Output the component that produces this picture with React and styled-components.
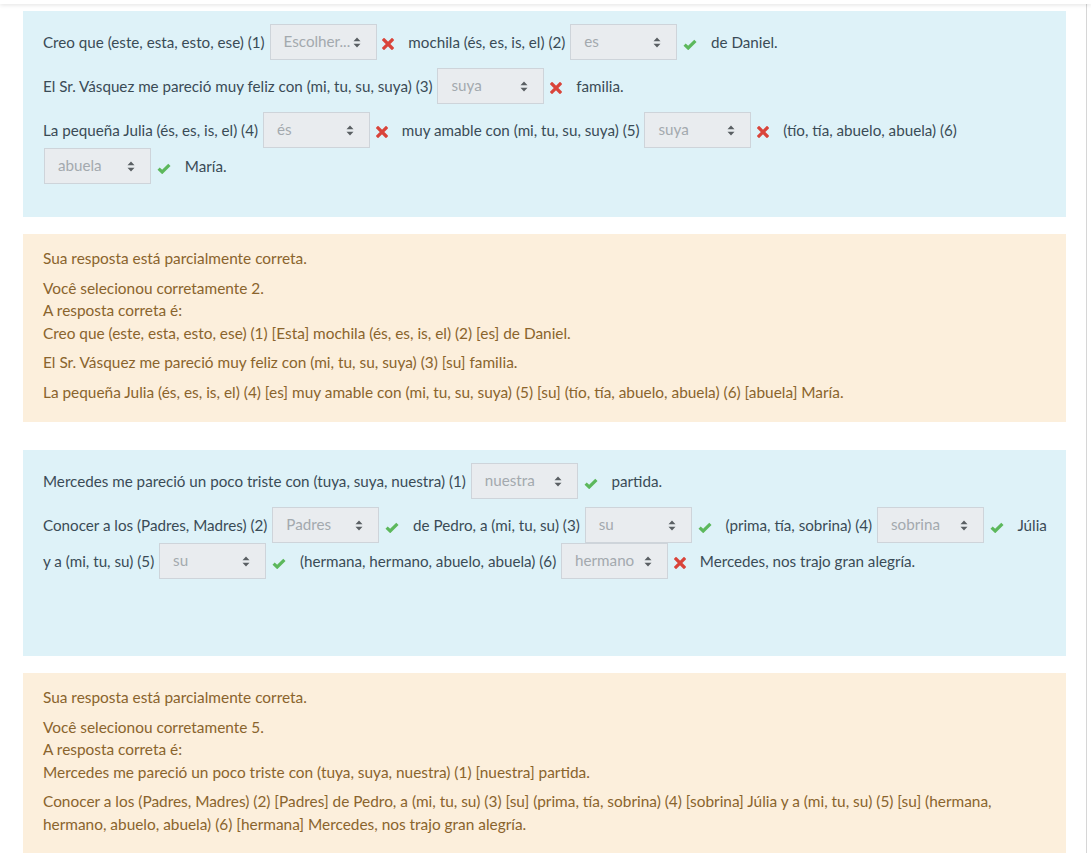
import React from 'react';
import styled, { createGlobalStyle } from 'styled-components';

const GlobalStyle = createGlobalStyle`
  html, body {
    margin: 0;
    padding: 0;
    background: #fff;
  }
  body {
    font-family: Lato, "Open Sans", sans-serif;
    font-size: 15.4px;
  }
`;

const TopBar = styled.div`
  height: 4px;
  background: #fff;
  box-shadow: 0 1px 4px rgba(0, 0, 0, 0.12);
  position: relative;
  z-index: 2;
`;

const Frame = styled.div`
  width: 1087px;
  box-sizing: border-box;
  border-right: 1px solid #d6d6d6;
  padding: 7px 20px 0 23px;
  min-height: 849px;
`;

const Question = styled.div`
  margin-bottom: 28px;
`;

const Formulation = styled.div`
  background: #def2f8;
  color: #3a4b56;
  font-size: 15.2px;
  padding: 13px 14px ${({ $padBottom }) => $padBottom}px 20px;
  margin-bottom: 17px;
`;

const Line = styled.p`
  margin: 0 0 8px;
  line-height: 36px;
  &:last-child {
    margin-bottom: 0;
  }
`;

const Select = styled.span`
  display: inline-flex;
  align-items: center;
  justify-content: space-between;
  box-sizing: border-box;
  width: 107px;
  height: 36px;
  padding: 0 15px 0 13px;
  margin: 0 2px 0 1px;
  vertical-align: top;
  background: #e9ecef;
  border: 1px solid #ced4da;
  color: #a3a9ae;
  line-height: 1;
  white-space: nowrap;
`;

const Mark = styled.span`
  display: inline-block;
  vertical-align: middle;
  margin: 0 10px 0 0;
  line-height: 0;
`;

const Outcome = styled.div`
  background: #fcefdc;
  color: #8a642d;
  padding: 13px 20px 19px;
  line-height: 22.5px;
`;

const Para = styled.p`
  margin: 0 0 7px;
  &:last-child {
    margin-bottom: 0;
  }
`;

const Arrows = () => (
  <svg width="8" height="11" viewBox="0 0 8 11">
    <path d="M4 0.5 L7.5 4.2 H0.5 Z M4 10.5 L7.5 6.8 H0.5 Z" fill="#5a5f63" />
  </svg>
);

const Cross = () => (
  <svg width="12" height="12" viewBox="0 0 12 12">
    <path d="M2 2 L10 10 M10 2 L2 10" stroke="#d9443a" strokeWidth="3.2" strokeLinecap="square" />
  </svg>
);

const Check = () => (
  <svg width="14" height="11" viewBox="0 0 14 11">
    <path d="M1.6 5.6 L5.2 9 L12.4 1.8" stroke="#5cb85c" strokeWidth="3.2" fill="none" strokeLinejoin="miter" />
  </svg>
);

const sel = (value, ok) => ({ value, ok });

const Sentence = ({ parts }) => (
  <Line>
    {parts.map((p, i) => {
      if (typeof p === 'string') {
        return <React.Fragment key={i}>{p}{' '}</React.Fragment>;
      }
      return (
        <React.Fragment key={i}>
          <Select>
            <span>{p.value}</span>
            <Arrows />
          </Select>{' '}
          <Mark>{p.ok ? <Check /> : <Cross />}</Mark>{' '}
        </React.Fragment>
      );
    })}
  </Line>
);

const question1 = [
  ['Creo que (este, esta, esto, ese) (1)', sel('Escolher...', false), 'mochila (és, es, is, el) (2)', sel('es', true), 'de Daniel.'],
  ['El Sr. Vásquez me pareció muy feliz con (mi, tu, su, suya) (3)', sel('suya', false), 'familia.'],
  ['La pequeña Julia (és, es, is, el) (4)', sel('és', false), 'muy amable con (mi, tu, su, suya) (5)', sel('suya', false), '(tío, tía, abuelo, abuela) (6)', sel('abuela', true), 'María.'],
];

const question2 = [
  ['Mercedes me pareció un poco triste con (tuya, suya, nuestra) (1)', sel('nuestra', true), 'partida.'],
  ['Conocer a los (Padres, Madres) (2)', sel('Padres', true), 'de Pedro, a (mi, tu, su) (3)', sel('su', true), '(prima, tía, sobrina) (4)', sel('sobrina', true), 'Júlia y a (mi, tu, su) (5)', sel('su', true), '(hermana, hermano, abuelo, abuela) (6)', sel('hermano', false), 'Mercedes, nos trajo gran alegría.'],
];

export default function App() {
  return (
    <>
      <GlobalStyle />
      <TopBar />
      <Frame>
        <Question>
          <Formulation $padBottom={33}>
            {question1.map((parts, i) => <Sentence key={i} parts={parts} />)}
          </Formulation>
          <Outcome>
            <Para>Sua resposta está parcialmente correta.</Para>
            <Para>
              Você selecionou corretamente 2.<br />
              A resposta correta é:<br />
              Creo que (este, esta, esto, ese) (1) [Esta] mochila (és, es, is, el) (2) [es] de Daniel.
            </Para>
            <Para>El Sr. Vásquez me pareció muy feliz con (mi, tu, su, suya) (3) [su] familia.</Para>
            <Para>La pequeña Julia (és, es, is, el) (4) [es] muy amable con (mi, tu, su, suya) (5) [su] (tío, tía, abuelo, abuela) (6) [abuela] María.</Para>
          </Outcome>
        </Question>
        <Question>
          <Formulation $padBottom={77}>
            {question2.map((parts, i) => <Sentence key={i} parts={parts} />)}
          </Formulation>
          <Outcome>
            <Para>Sua resposta está parcialmente correta.</Para>
            <Para>
              Você selecionou corretamente 5.<br />
              A resposta correta é:<br />
              Mercedes me pareció un poco triste con (tuya, suya, nuestra) (1) [nuestra] partida.
            </Para>
            <Para>Conocer a los (Padres, Madres) (2) [Padres] de Pedro, a (mi, tu, su) (3) [su] (prima, tía, sobrina) (4) [sobrina] Júlia y a (mi, tu, su) (5) [su] (hermana, hermano, abuelo, abuela) (6) [hermana] Mercedes, nos trajo gran alegría.</Para>
          </Outcome>
        </Question>
      </Frame>
    </>
  );
}
